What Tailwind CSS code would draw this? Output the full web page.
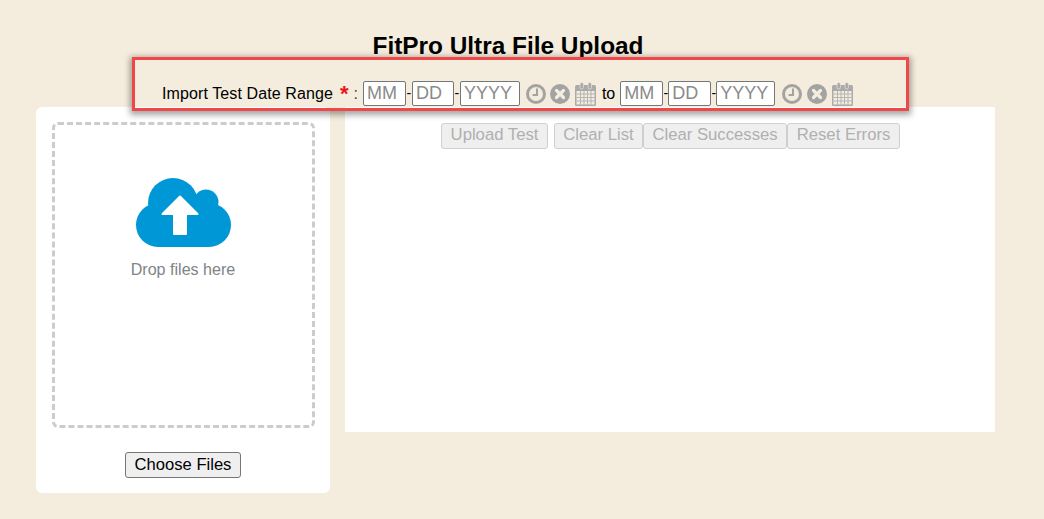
<!DOCTYPE html>
<html><head><meta charset="utf-8"><script src="https://cdn.jsdelivr.net/npm/@tailwindcss/browser@4"></script></head>
<body class="bg-[#f4ecdd] font-['Liberation_Sans',sans-serif] text-black h-[519px] w-[1044px] overflow-hidden relative">
<h1 class="w-[1016px] text-center font-bold text-[24.4px] leading-[26px] pt-[33px]">FitPro Ultra File Upload</h1>
<div class="flex items-center h-[25px] mt-[22px] ml-[162px] text-[16px]">
  <span class="tracking-[0.1px]">Import Test Date Range</span><span class="text-[#e8141c] font-bold text-[22px] ml-[7px] leading-none">*</span><span class="ml-[5px] text-[#444] mr-[5px]">:</span>
  <input placeholder="MM" class="w-[43px] h-[25px] bg-white border border-[#767676] rounded-[2px] px-[3px] text-[18px] placeholder:text-[#8a8a8a]">
  <span class="w-[6px] text-center text-[14px]">-</span>
  <input placeholder="DD" class="w-[42px] h-[25px] bg-white border border-[#767676] rounded-[2px] px-[3px] text-[18px] placeholder:text-[#8a8a8a]">
  <span class="w-[6px] text-center text-[14px]">-</span>
  <input placeholder="YYYY" class="w-[60px] h-[25px] bg-white border border-[#767676] rounded-[2px] px-[3px] text-[18px] placeholder:text-[#8a8a8a]">
  <svg class="ml-[6px] mt-[1px]" width="20" height="20" viewBox="0 0 20 20"><circle cx="10" cy="10" r="8.5" fill="#f4ecdd" stroke="#a3a3a3" stroke-width="3"/><path d="M11 4.5V11H6.5" fill="none" stroke="#a3a3a3" stroke-width="2"/></svg>
  <svg class="ml-[4px] mt-[1px]" width="20" height="20" viewBox="0 0 20 20"><circle cx="10" cy="10" r="10" fill="#a3a3a3"/><path d="M6.500 6.500l7 7M13.500 6.500l-7 7" stroke="#f4ecdd" stroke-width="3.2" stroke-linecap="round"/></svg>
  <svg class="ml-[5px]" width="21" height="24" viewBox="0 0 21 24"><rect x="0" y="3" width="21" height="21" rx="1.5" fill="#ababab"/><rect x="1.5" y="9" width="18" height="13.500" fill="#f4ecdd"/><path d="M1.500 12h18M1.500 15.500h18M1.500 19h18M5.500 9v14M9 9v14M12.500 9v14M16 9v14" stroke="#b5b5b5" stroke-width="1"/><rect x="5" y="0.500" width="3.500" height="6.500" rx="1.700" fill="#ababab" stroke="#f4ecdd" stroke-width=".6"/><rect x="13" y="0.500" width="3.500" height="6.500" rx="1.700" fill="#ababab" stroke="#f4ecdd" stroke-width=".6"/></svg>
  <span class="ml-[6px] mr-[5px]">to</span>
  <input placeholder="MM" class="w-[43px] h-[25px] bg-white border border-[#767676] rounded-[2px] px-[3px] text-[18px] placeholder:text-[#8a8a8a]">
  <span class="w-[5px] text-center text-[14px]">-</span>
  <input placeholder="DD" class="w-[43px] h-[25px] bg-white border border-[#767676] rounded-[2px] px-[3px] text-[18px] placeholder:text-[#8a8a8a]">
  <span class="w-[5px] text-center text-[14px]">-</span>
  <input placeholder="YYYY" class="w-[59px] h-[25px] bg-white border border-[#767676] rounded-[2px] px-[3px] text-[18px] placeholder:text-[#8a8a8a]">
  <svg class="ml-[7px] mt-[1px]" width="20" height="20" viewBox="0 0 20 20"><circle cx="10" cy="10" r="8.5" fill="#f4ecdd" stroke="#a3a3a3" stroke-width="3"/><path d="M11 4.500V11H6.500" fill="none" stroke="#a3a3a3" stroke-width="2"/></svg>
  <svg class="ml-[5px] mt-[1px]" width="20" height="20" viewBox="0 0 20 20"><circle cx="10" cy="10" r="10" fill="#a3a3a3"/><path d="M6.500 6.500l7 7M13.500 6.500l-7 7" stroke="#f4ecdd" stroke-width="3.2" stroke-linecap="round"/></svg>
  <svg class="ml-[5px]" width="21" height="24" viewBox="0 0 21 24"><rect x="0" y="3" width="21" height="21" rx="1.500" fill="#ababab"/><rect x="1.500" y="9" width="18" height="13.500" fill="#f4ecdd"/><path d="M1.500 12h18M1.500 15.500h18M1.500 19h18M5.500 9v14M9 9v14M12.500 9v14M16 9v14" stroke="#b5b5b5" stroke-width="1"/><rect x="5" y="0.500" width="3.500" height="6.500" rx="1.700" fill="#ababab" stroke="#f4ecdd" stroke-width=".6"/><rect x="13" y="0.500" width="3.500" height="6.500" rx="1.700" fill="#ababab" stroke="#f4ecdd" stroke-width=".6"/></svg>
</div>
<div class="flex items-start ml-[36px] mt-px gap-[15px]">
  <div class="w-[294px] h-[386px] bg-white rounded-[6px] pt-[15px] px-[16px] flex flex-col items-center">
    <div class="w-[263px] h-[306px] border-[3px] border-dashed border-[#cccccc] rounded-[6px] flex flex-col items-center pt-[53px]">
      <svg width="95" height="69" viewBox="0 0 95 69"><g fill="#0097d6"><circle cx="37" cy="25" r="25"/><circle cx="70" cy="24" r="12.500"/><circle cx="22" cy="47" r="22"/><circle cx="73" cy="47" r="22"/><rect x="22" y="25" width="51" height="44"/></g><polygon points="44,18.500 26.500,36 38,36 38,56 50,56 50,36 61.500,36" fill="#fff" stroke="#fff" stroke-width="2" stroke-linejoin="round"/></svg>
      <p class="text-[#808488] text-[16.1px] leading-[20px] mt-[12px]">Drop files here</p>
    </div>
    <button class="mt-[24px] w-[116px] h-[26px] bg-[#efefef] border border-[#767676] rounded-[3px] text-[16.6px] leading-none">Choose Files</button>
  </div>
  <div class="w-[650px] h-[325px] bg-white pt-[16px] pl-[96px] flex items-start">
    <button class="w-[107px] h-[26px] pb-[2px] bg-[#efefef] border border-[#cfcfcf] rounded-[3px] text-[#b0b0b0] text-[16.7px] leading-none">Upload Test</button>
    <button class="ml-[6px] w-[89px] h-[26px] pb-[2px] bg-[#efefef] border border-[#cfcfcf] rounded-[3px] text-[#b0b0b0] text-[16.7px] leading-none">Clear List</button>
    <button class="w-[144px] h-[26px] pb-[2px] bg-[#efefef] border border-[#cfcfcf] rounded-[3px] text-[#b0b0b0] text-[16.7px] leading-none">Clear Successes</button>
    <button class="w-[113px] h-[26px] pb-[2px] bg-[#efefef] border border-[#cfcfcf] rounded-[3px] text-[#b0b0b0] text-[16.7px] leading-none">Reset Errors</button>
  </div>
</div>
<div class="absolute left-[132px] top-[57px] w-[777px] h-[54px] border-[3px] border-[#f04848] shadow-[0_2px_6px_2px_rgba(0,0,0,0.35)] pointer-events-none"></div>
</body></html>
